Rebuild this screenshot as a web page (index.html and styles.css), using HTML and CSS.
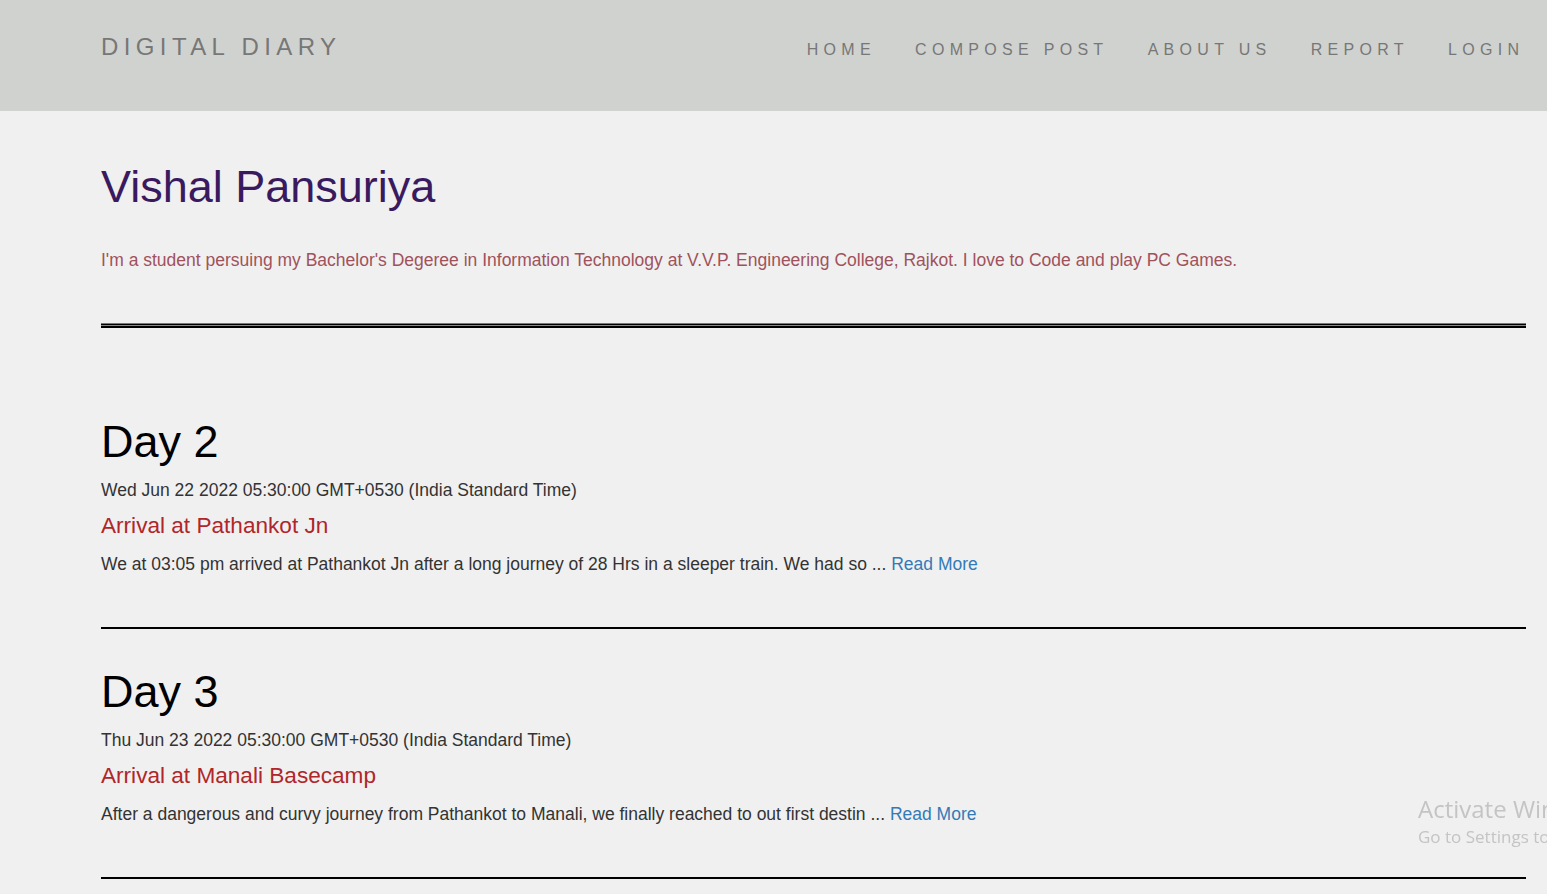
FILE: index.html
```html
<!DOCTYPE html>
<html lang="en">
<head>
<meta charset="utf-8">
<title>Digital Diary</title>
<link rel="stylesheet" href="styles.css">
</head>
<body>
<header class="topbar">
  <a class="brand" href="#">DIGITAL DIARY</a>
  <nav class="nav">
    <a href="#">HOME</a>
    <a href="#">COMPOSE POST</a>
    <a href="#">ABOUT US</a>
    <a href="#">REPORT</a>
    <a href="#">LOGIN</a>
  </nav>
</header>
<main class="content">
  <h1 class="name">Vishal Pansuriya</h1>
  <p class="bio">I'm a student persuing my Bachelor's Degeree in Information Technology at V.V.P. Engineering College, Rajkot. I love to Code and play PC Games.</p>
  <div class="rule-double"></div>

  <article class="post">
    <h1 class="day">Day 2</h1>
    <p class="date">Wed Jun 22 2022 05:30:00 GMT+0530 (India Standard Time)</p>
    <h3 class="post-title">Arrival at Pathankot Jn</h3>
    <p class="excerpt">We at 03:05 pm arrived at Pathankot Jn after a long journey of 28 Hrs in a sleeper train. We had so ... <a href="#">Read More</a></p>
    <div class="rule"></div>
  </article>

  <article class="post">
    <h1 class="day">Day 3</h1>
    <p class="date">Thu Jun 23 2022 05:30:00 GMT+0530 (India Standard Time)</p>
    <h3 class="post-title">Arrival at Manali Basecamp</h3>
    <p class="excerpt">After a dangerous and curvy journey from Pathankot to Manali, we finally reached to out first destin ... <a href="#">Read More</a></p>
    <div class="rule"></div>
  </article>
</main>
<div class="activate">
  <div class="activate-title">Activate Windows</div>
  <div class="activate-sub">Go to Settings to activate Windows.</div>
</div>
</body>
</html>
```

FILE: styles.css
```css
html {
  overflow: hidden;
}
body {
  margin: 0;
  background: #f0f0f0;
  font-family: "Liberation Sans", Arial, sans-serif;
  color: #333;
}
a {
  text-decoration: none;
}
.topbar {
  box-sizing: border-box;
  height: 111px;
  background: #d0d2cf;
  display: flex;
  align-items: baseline;
  justify-content: space-between;
  padding: 33px 3px 0 101px;
}
.brand {
  font-size: 24px;
  line-height: 1.2;
  letter-spacing: 5.4px;
  color: #777;
}
.nav {
  display: flex;
  align-items: baseline;
}
.nav a {
  font-size: 16px;
  line-height: 1.2;
  letter-spacing: 5.3px;
  color: #777;
  padding: 0 19.6px;
}
.content {
  padding: 51px 21px 0 101px;
}
.name {
  margin: 0;
  font-size: 45px;
  line-height: 1.1;
  font-weight: normal;
  color: #3a1a5e;
}
.bio {
  margin: 36px 0 0;
  font-size: 17.5px;
  line-height: 25.7px;
  color: #a0525c;
}
.rule-double {
  margin-top: 50px;
  height: 5px;
  background: linear-gradient(#777 0 1px, #000 1px 2px, #888 2px 3px, #000 3px 5px);
}
.post {
  padding-top: 38px;
}
.post:first-of-type {
  padding-top: 89px;
}
.day {
  margin: 0;
  font-size: 45px;
  line-height: 1.1;
  font-weight: normal;
  color: #000;
}
.date {
  margin: 11px 0 0;
  font-size: 17.5px;
  line-height: 25.7px;
  color: #333;
}
.post-title {
  margin: 9px 0 0;
  font-size: 22.6px;
  line-height: 27px;
  font-weight: normal;
  color: #b0262a;
}
.excerpt {
  margin: 13px 0 0;
  font-size: 17.5px;
  line-height: 25.7px;
  color: #333;
}
.excerpt a {
  color: #337ab7;
}
.rule {
  margin-top: 49px;
  height: 2px;
  background: #000;
}
.activate {
  position: fixed;
  left: 1418px;
  top: 793px;
  white-space: nowrap;
  font-family: "Open Sans", "Noto Sans", sans-serif;
  color: #c4c4c4;
}
.activate-title {
  font-size: 24px;
  line-height: 31px;
}
.activate-sub {
  font-size: 17px;
  line-height: 26px;
}
```
